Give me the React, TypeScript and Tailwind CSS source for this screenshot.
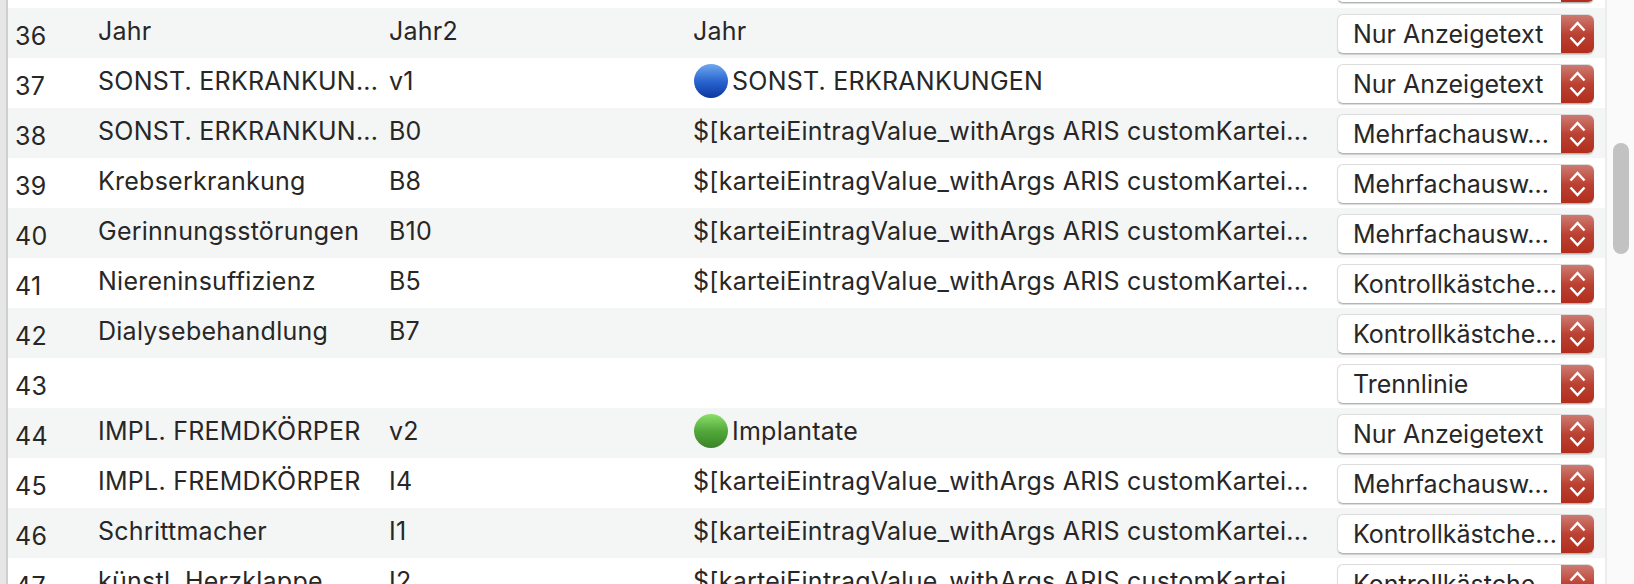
import React from 'react';

type Row = { n: number; label: string; name: string; value: string; dot?: 'blue' | 'green'; type: string };

const macro = '$[karteiEintragValue_withArgs ARIS customKartei...';

const rows: Row[] = [
  { n: 36, label: 'Jahr', name: 'Jahr2', value: 'Jahr', type: 'Nur Anzeigetext' },
  { n: 37, label: 'SONST. ERKRANKUN...', name: 'v1', value: 'SONST. ERKRANKUNGEN', dot: 'blue', type: 'Nur Anzeigetext' },
  { n: 38, label: 'SONST. ERKRANKUN...', name: 'B0', value: macro, type: 'Mehrfachausw...' },
  { n: 39, label: 'Krebserkrankung', name: 'B8', value: macro, type: 'Mehrfachausw...' },
  { n: 40, label: 'Gerinnungsstörungen', name: 'B10', value: macro, type: 'Mehrfachausw...' },
  { n: 41, label: 'Niereninsuffizienz', name: 'B5', value: macro, type: 'Kontrollkästche...' },
  { n: 42, label: 'Dialysebehandlung', name: 'B7', value: '', type: 'Kontrollkästche...' },
  { n: 43, label: '', name: '', value: '', type: 'Trennlinie' },
  { n: 44, label: 'IMPL. FREMDKÖRPER', name: 'v2', value: 'Implantate', dot: 'green', type: 'Nur Anzeigetext' },
  { n: 45, label: 'IMPL. FREMDKÖRPER', name: 'I4', value: macro, type: 'Mehrfachausw...' },
  { n: 46, label: 'Schrittmacher', name: 'I1', value: macro, type: 'Kontrollkästche...' },
  { n: 47, label: 'künstl. Herzklappe', name: 'I2', value: macro, type: 'Kontrollkästche...' },
];

const Stepper = () => (
  <div className="w-[33px] h-full rounded-r-[6px] bg-gradient-to-b from-[#cc7a72] via-[#bb4133] to-[#b12d1c] flex items-center justify-center">
    <svg width="17" height="28" viewBox="0 0 17 28" fill="none" stroke="white" strokeWidth="2.5">
      <path d="M1.5 10.5 L8.5 3 L15.5 10.5" />
      <path d="M1.5 17.5 L8.5 25 L15.5 17.5" />
    </svg>
  </div>
);

const Select = ({ text }: { text: string }) => (
  <div className="w-[257px] h-[40px] flex rounded-[6px] bg-white border border-[#dcdcdc] border-r-0 border-b-[#b4b4b4] shadow-[0_1px_1px_rgba(0,0,0,0.15)]">
    <div className="flex-1 pl-[15px] text-[25px] tracking-[0px] leading-[39px] text-[#272727] whitespace-nowrap overflow-hidden">{text}</div>
    <Stepper />
  </div>
);

const Dot = ({ color }: { color: 'blue' | 'green' }) => (
  <span
    className={
      color === 'blue'
        ? 'inline-block w-[34px] h-[34px] ml-[1px] mr-[4px] rounded-full bg-gradient-to-b from-[#6fa8ee] via-[#2a66d0] to-[#0c36a0] shrink-0'
        : 'inline-block w-[34px] h-[34px] ml-[1px] mr-[4px] rounded-full bg-gradient-to-b from-[#8be06a] via-[#52a83a] to-[#3a8428] shrink-0'
    }
  />
);

export default function App() {
  return (
    <div className="w-[1634px] h-[584px] overflow-hidden flex bg-white font-['Inter','Liberation_Sans',sans-serif]">
      <div className="w-[8px] shrink-0 bg-[#e6e6e6] border-r-2 border-[#cfcfcf]" />
      <div className="w-[1597px] shrink-0 pt-[8px] relative">
        {/* Select of the row scrolled off above */}
        <div className="h-0 relative">
          <div className="absolute left-[1329px] top-[-45px]">
            <Select text="" />
          </div>
        </div>
        {rows.map((r, i) => (
          <div key={r.n} className={`h-[50px] flex items-start text-[25px] tracking-[0.25px] ${i % 2 === 0 ? 'bg-[#f4f5f5]' : 'bg-white'}`}>
            <div className="w-[90px] pl-[7px] pt-[12px] leading-[32px] text-[#272727]">{r.n}</div>
            <div className="w-[291px] pt-[7px] leading-[32px] text-[#272727] whitespace-nowrap">{r.label}</div>
            <div className="w-[304px] pt-[7px] leading-[32px] text-[#272727] whitespace-nowrap">{r.name}</div>
            <div className="w-[644px] pt-[6px] flex items-center leading-[34px] text-[#272727] whitespace-nowrap">
              {r.dot && <Dot color={r.dot} />}
              {r.value}
            </div>
            <div className="pt-[6px]">
              <Select text={r.type} />
            </div>
          </div>
        ))}
      </div>
      <div className="flex-1 bg-[#fafafa] border-l-2 border-[#ececec] pl-[6px] pt-[143px]">
        <div className="w-[16px] h-[111px] rounded-full bg-[#c2c2c2]" />
      </div>
    </div>
  );
}
